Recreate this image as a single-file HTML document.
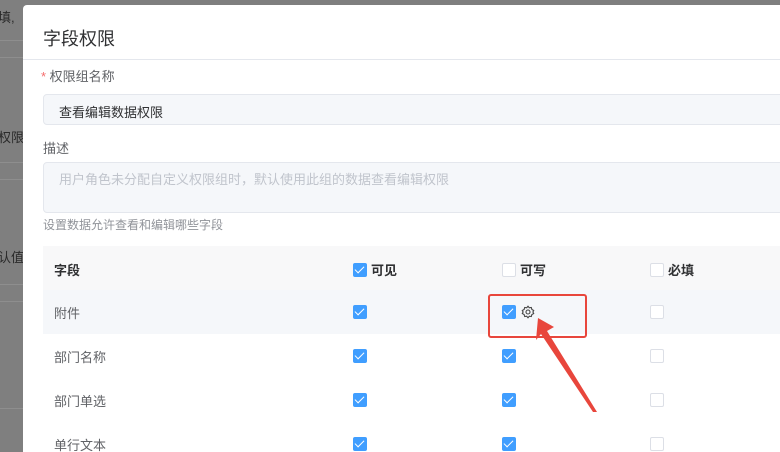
<!DOCTYPE html>
<html style="width:780px;height:452px;overflow:hidden"><head><meta charset="utf-8"><style>
*{box-sizing:border-box;margin:0;padding:0}
body{width:780px;height:452px;overflow:hidden;background:#7f7f7f;font-family:"Liberation Sans","Noto Sans CJK SC",sans-serif;position:relative}
.bgt{position:absolute;color:#2a2a2a;font-size:13px;left:0}
.bgl{position:absolute;left:0;width:23px;height:1px;background:#8e8e8e}
.modal{position:absolute;left:23px;top:5px;width:770px;height:460px;background:#fff;border-radius:4px}
.abs{position:absolute}
.t{font-size:18px;color:#303133;left:20px;top:20px}
.hr{left:0;right:0;top:54px;height:1px;background:#e4e7ed}
.lbl{font-size:13px;color:#606266}
.inp{left:20px;width:760px;border:1px solid #e4e7ed;background:#f5f7fa;border-radius:4px;font-size:13px}
.cb{position:absolute;width:14px;height:14px;border-radius:2px}
.on{background:#409eff}
.on:after{content:"";position:absolute;left:4px;top:1px;width:4px;height:8px;border:solid #fff;border-width:0 1.3px 1.3px 0;transform:rotate(45deg)}
.off{border:1px solid #dcdfe6;background:#fff}
.row{left:20px;width:760px;height:44px;font-size:13px;color:#606266}
</style></head><body>
<div class="bgt" style="top:7px;left:-2px">填,</div>
<div class="bgl" style="top:40px"></div><div class="bgl" style="top:57px"></div>
<div class="bgt" style="top:127px;left:-2px">权限</div>
<div class="bgl" style="top:162px"></div><div class="bgl" style="top:179px"></div>
<div class="bgt" style="top:247px;left:-2px">认值</div>
<div class="bgl" style="top:284px"></div><div class="bgl" style="top:301px"></div>
<div class="bgl" style="top:408px"></div>
<div class="modal">
<div class="abs t">字段权限</div>
<div class="abs hr"></div>
<div class="abs lbl" style="left:18px;top:61px"><span style="color:#f56c6c">*</span> 权限组名称</div>
<div class="abs inp" style="top:89px;height:31px;color:#303133;padding:7px 15px">查看编辑数据权限</div>
<div class="abs lbl" style="left:20px;top:133px">描述</div>
<div class="abs inp" style="top:157px;height:51px;color:#c0c4cc;padding:6px 15px">用户角色未分配自定义权限组时，默认使用此组的数据查看编辑权限</div>
<div class="abs" style="left:20px;top:211px;font-size:12px;color:#909399">设置数据允许查看和编辑哪些字段</div>
<div class="abs row" style="top:241px;background:#f8f8f9;color:#303133;font-weight:bold"><span class="abs" style="left:11px;top:14px">字段</span>
<span class="cb on" style="left:310px;top:17px"></span><span class="abs" style="left:328px;top:14px">可见</span>
<span class="cb off" style="left:459px;top:17px"></span><span class="abs" style="left:477px;top:14px">可写</span>
<span class="cb off" style="left:607px;top:17px"></span><span class="abs" style="left:625px;top:14px">必填</span></div>
<div class="abs row" style="top:285px;background:#f5f7fa"><span class="abs" style="left:11px;top:13px">附件</span><span class="cb on" style="left:310px;top:15px"></span><span class="cb on" style="left:459px;top:15px"></span><span class="cb off" style="left:607px;top:15px"></span>
<svg class="abs" style="left:478px;top:15px" width="14" height="14" viewBox="0 0 14 14" fill="none" stroke="#444" stroke-width="1.1"><path d="M7 1.2l1.3 1.6 2-.3.6 2 1.8 1L11.9 7l.8 1.5-1.8 1-.6 2-2-.3L7 12.8 5.7 11.2l-2 .3-.6-2-1.8-1L2.1 7l-.8-1.5 1.8-1 .6-2 2 .3z"/><circle cx="7" cy="7" r="2"/></svg></div>
<div class="abs row" style="top:329px"><span class="abs" style="left:11px;top:13px">部门名称</span><span class="cb on" style="left:310px;top:15px"></span><span class="cb on" style="left:459px;top:15px"></span><span class="cb off" style="left:607px;top:15px"></span></div>
<div class="abs row" style="top:373px"><span class="abs" style="left:11px;top:13px">部门单选</span><span class="cb on" style="left:310px;top:15px"></span><span class="cb on" style="left:459px;top:15px"></span><span class="cb off" style="left:607px;top:15px"></span></div>
<div class="abs row" style="top:417px"><span class="abs" style="left:11px;top:13px">单行文本</span><span class="cb on" style="left:310px;top:15px"></span><span class="cb on" style="left:459px;top:15px"></span><span class="cb off" style="left:607px;top:15px"></span></div>
</div>
<div class="abs" style="left:488px;top:294px;width:99px;height:44px;border:2px solid #e8463c;border-radius:3px"></div>
<svg class="abs" style="left:0;top:0" width="780" height="452"><polygon points="538,318 554,327 547,331 597,412 593,412 541,334 536,340" fill="#e8463c"/></svg>
</body></html>
